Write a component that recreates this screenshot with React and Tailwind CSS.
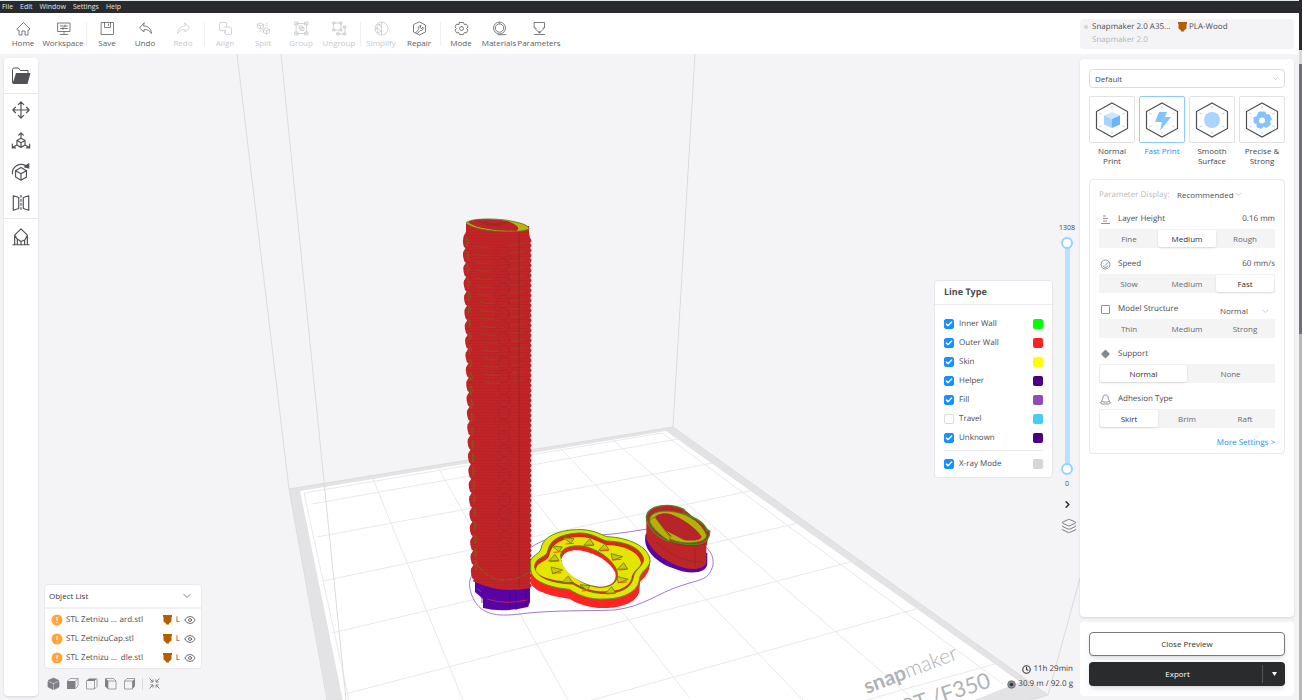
import { Check, ChevronDown, ChevronRight, Clock, Layers, Eye } from "lucide-react";

const menus = ["File", "Edit", "Window", "Settings", "Help"];

const icons = {
  home: <path d="M1 8 7.5 1.5 14 8l-1 1h-1v5H9v-4H6v4H3V9H2z" />,
  workspace: <path d="M2 2h12v8.500H2zM8 10.500V13M4 13.500h8M4.500 5h7M4.500 7.500h7M9 4v2M7 6.500v2" />,
  save: <path d="M1.500 1.500h12v12h-12zM4.500 1.500v5h6v-5M8.500 3v1.500" />,
  undo: <path d="M6 2 1.500 7 6 11V8.500c3.500-.3 6 1.500 7.500 4C13 8 10.500 5 6 5z" />,
  redo: <path d="M9 2l4.500 5L9 11V8.500c-3.500-.3-6 1.500-7.500 4C2 8 4.500 5 9 5z" />,
  align: <path d="M3 1.500h4.500q1 0 1 1V6H12q1.500 0 1.500 1.500v5q0 1-1 1h-4q-1.500 0-1.500-1.500V9.500H3Q1.500 9.500 1.500 8V3Q1.500 1.500 3 1.500zM7 9.500V12M6 6h2.500" />,
  split: <path d="M4.500 2 7.500 3.500v3l-3 1.500-3-1.500v-3zM1.500 3.500l3 1.500 3-1.500M4.500 5v3M10.500 7l3 1.500v3l-3 1.500-3-1.500v-3zM7.500 8.500l3 1.500 3-1.500M10.500 10v3M9.500 4l1.500-2M4 10.500 5.500 9M11 4.500h.5" />,
  group: <path d="M2.500 2.500h10v10h-10zM1 1h3v3H1zM11 1h3v3h-3zM1 11h3v3H1zM11 11h3v3h-3zM5.500 5h3v3h-3zM7 6.500h3v3H7z" />,
  ungroup: <path d="M2 2h7v7H2zM1 1h2v2H1zM8 1h2v2H8zM1 8h2v2H1zM11 6h2v7H6v-2M12 5h2v2h-2zM12 12h2v2h-2zM5 12h2v2H5zM8 8h2v2H8z" />,
  simplify: <path d="M7.500 1a6.500 6.500 0 1 0 0 13 6.500 6.500 0 0 0 0-13v13M7.500 4 4 3l-1 4-1.500 1M3 7l4.500 3M7.500 6.500 4 3M3 7l1 5 3.500-2" />,
  repair: <path d="M7.500 1 13.500 4v7l-6 3-6-3V4zM4 11.500l2.500-3C5.500 6 7 4.500 9 4.500L8 6.500l1.500 1 1.500-1.500c.5 2.500-1 4-3 3.500l-2.500 3" />,
  mode: <path d="M5.500 1.500h4l.8 2 2.200-.3 1.500 2.800L12.700 7.500 14 9l-1.500 2.800-2.200-.3-.8 2h-4l-.8-2-2.200.3L1 9l1.300-1.500L1 6l1.500-2.800 2.200.3zM7.500 5.500a2 2 0 1 0 0 4 2 2 0 0 0 0-4" />,
  materials: <path d="M7.500 1a6 6 0 1 0 0 12 6 6 0 0 0 0-12M7.500 2.800a4.200 4.200 0 1 0 0 8.400 4.200 4.200 0 0 0 0-8.400M6 13.700h8" />,
  parameters: <path d="M2.500 1.500h10v5.500H11v1.500L8.500 11h-2L4 8.500V7H2.500zM2.500 13.500h10M7 11v1h1v-1" />,
  move: <path d="M11 2v18M2 11h18M8 5l3-3 3 3M8 17l3 3 3-3M5 8l-3 3 3 3M17 8l3 3-3 3" />,
  scale: <path d="M11 2v6M8.500 4.500 11 2l2.500 2.500M11 8l4.500 2.500v5L11 18l-4.500-2.500v-5zM6.500 10.500 11 13l4.500-2.500M11 13v5M6.500 15.500 2 18M1.500 14.500V18.500h3.500M15.500 15.500 20 18M20.500 14.500V18.500H17" />,
  rotate: (
    <>
      <path d="M11 6l6 3.500v7L11 20l-6-3.500v-7zM5 9.500l6 3.500 6-3.500M11 13v7M1.500 13C1 5 9 0 16.500 4" />
      <path d="M19.500 2v4.500L15 5.500z" fill="currentColor" />
    </>
  ),
  mirror: <path d="M2.500 3 8.500 5v12l-6 2zM19.500 3l-6 2v12l6 2zM11 2.500v2M11 7v2M11 11.500v2M11 16v2" />,
  support: <path d="M11 2l7 7-2.500 5-4.500 2-4.500-3L4 9zM2 19.500h18M4 19.500V9.500M7 19.500V13.500M11 19.500V16M15 19.500v-5M18 19.500V9" />,
};

const toolbar = [
  { id: "home", label: "Home" },
  { id: "workspace", label: "Workspace", wide: true },
  null,
  { id: "save", label: "Save" },
  { id: "undo", label: "Undo" },
  { id: "redo", label: "Redo", off: true },
  null,
  { id: "align", label: "Align", off: true },
  { id: "split", label: "Split", off: true },
  { id: "group", label: "Group", off: true },
  { id: "ungroup", label: "Ungroup", off: true },
  null,
  { id: "simplify", label: "Simplify", off: true },
  { id: "repair", label: "Repair" },
  null,
  { id: "mode", label: "Mode" },
  { id: "materials", label: "Materials" },
  { id: "parameters", label: "Parameters", wide: true },
];

const lineTypes = [
  { label: "Inner Wall", color: "bg-[#00ff00]", on: true },
  { label: "Outer Wall", color: "bg-[#ff2121]", on: true },
  { label: "Skin", color: "bg-[#ffff00]", on: true },
  { label: "Helper", color: "bg-[#4b0082]", on: true },
  { label: "Fill", color: "bg-[#8d4bbb]", on: true },
  { label: "Travel", color: "bg-[#44cef6]", on: false },
  { label: "Unknown", color: "bg-[#4b0082]", on: true },
];

const objects = [
  { start: "STL Zetnizu ...", end: "ard.stl" },
  { start: "STL ZetnizuCap.stl", end: "" },
  { start: "STL Zetnizu ...", end: "dle.stl" },
];

function Icon({ id, size = 15, className = "" }) {
  return (
    <svg
      width={size}
      height={size}
      viewBox={`0 0 ${size} ${size}`}
      fill="none"
      stroke="currentColor"
      strokeWidth={size > 15 ? 1.3 : 0.8}
      strokeLinejoin="round"
      strokeLinecap="round"
      className={className}
      aria-hidden="true"
    >
      {icons[id]}
    </svg>
  );
}

function Nozzle() {
  return (
    <svg width="9" height="10" viewBox="0 0 9 10" className="shrink-0" aria-hidden="true">
      <path d="M0 0h9v2H8.500v4.500L6 8.500V9.500H3V8.500L.5 6.500V2H0z" fill="#b35f00" />
    </svg>
  );
}

function TopBar() {
  return (
    <header className="flex h-[41px] shrink-0 items-center bg-white pl-1 pr-[5px]">
      {toolbar.map((item, i) =>
        item ? (
          <button
            key={item.id}
            disabled={item.off}
            className={`flex shrink-0 flex-col items-center gap-px pt-[2px] ${item.wide ? "w-[42px]" : "w-[38px]"} ${item.off ? "text-[#c8c9cb]" : "text-[#5b5d61]"}`}
          >
            <Icon id={item.id} />
            <span>{item.label}</span>
          </button>
        ) : (
          <span key={i} className="ml-[2px] mr-px h-6 w-px shrink-0 bg-[#f0f0f0]" />
        )
      )}
      <div className="ml-auto flex h-[30px] w-[214px] shrink-0 flex-col justify-center gap-px rounded bg-[#f4f4f6] pl-1">
        <div className="flex items-center">
          <span className="mr-1 size-1 rounded-full bg-[#d0d0d2]" />
          <span className="w-[86px]">Snapmaker 2.0 A35...</span>
          <Nozzle />
          <span className="ml-[2px]">PLA-Wood</span>
        </div>
        <span className="pl-2 text-[#b3b4b6]">Snapmaker 2.0</span>
      </div>
    </header>
  );
}

// bumpy outline of the printed hilt, walked down the left side and back up the right
function hiltOutline() {
  let d = "M466 224V232";
  for (let i = 0; i < 24; i++) {
    const x = 464 + i * 0.36;
    const y = 236 + i * 14.4;
    d += ` Q${x - 3} ${y + 2} ${x} ${y + 11} l1.500 1 l-1 2`;
  }
  d += " L475 582 Q500 594 530 588";
  for (let i = 0; i < 70; i++) {
    d += " q3 -2.500 0 -5";
  }
  return d + " L529 232 V226 Z";
}

const outline = hiltOutline();
const flecks = Array.from({ length: 25 }, (_, i) => i);
const triangles = [
  [388, 422, 0], [447, 428, 1], [492, 443, 1], [530, 470, 2], [548, 500, 1], [547, 538, 2],
  [512, 572, 1], [437, 563, 0], [382, 540, 1], [350, 510, 2], [342, 475, 1], [353, 447, 0],
];
const triangleShapes = ["-17,-9 14,-6 4,8", "-16,8 3,-12 15,7", "-17,-9 18,0 -12,11"];
const cap = "M272 482C284 458 302 464 305 438C315 405 365 390 410 389C455 387 480 402 500 410C565 412 628 440 630 482C629 507 600 512 598 540C592 580 540 597 495 597C450 600 415 586 388 568C330 563 276 545 272 510Z";

function PrintScene() {
  return (
    <svg
      className="absolute inset-0 h-full w-full"
      viewBox="0 54 1299 646"
      preserveAspectRatio="xMidYMid slice"
      role="img"
      aria-label="Sliced model preview"
    >
      <defs>
        <pattern id="layers" width="30" height="3" patternUnits="userSpaceOnUse">
          <path d="M0 1 Q15 2.500 30 1" stroke="#8b1d1d" strokeWidth=".5" fill="none" opacity=".45" />
        </pattern>
        <pattern id="skin" width="6" height="6" patternUnits="userSpaceOnUse" patternTransform="rotate(35)">
          <path d="M0 1H6M0 4H6" stroke="#cfd200" strokeWidth="1" />
        </pattern>
      </defs>

      {/* build plate */}
      <path d="M289 489 673 427 1048 695 1028 702H328z" fill="#e3e3e5" />
      <path d="M300 491 666 431 1020 682 972 701H343z" fill="#fff" />
      <g fill="none" stroke="#e9e9eb">
        <path d="M304 493 662 433 1003 684M304 493 349 700M312 504 678 439M317 537 713 463M323 581 750 491M332 633 798 523M345 694 858 560M560 709 923 607M803 718 998 663" />
        <path d="M373 479 463 700M439 469 568 700M502 459 690 698M560 448 803 700M613 440 911 697" />
      </g>
      <g fill="none" stroke="#dcdcde">
        <path d="M237 54 289 489 673 427 695 54M281 54 346 700M673 427 1048 695 1080 578M1048 695 1020 703M289 489 327 700" />
      </g>
      <g fill="#afb2b6" fontFamily="Lato, sans-serif">
        <text x="867" y="694" fontSize="21" transform="rotate(-21 867 694)">
          <tspan fontWeight="bold">snap</tspan>
          <tspan fontWeight="300">maker</tspan>
        </text>
        <text x="905" y="715" fontSize="22" transform="rotate(-18 905 715)">0T /F350</text>
      </g>

      {/* skirt */}
      <path
        d="M475 571C466 580 470 592 474 600C482 614 495 617 520 614C550 610 590 611 615 610C645 606 655 594 683 585C702 579 709 580 713 565C714 555 709 550 705 546M530 548C545 538 560 534 574 534M602 535C625 533 640 530 648 529"
        fill="none"
        stroke="#8d56bd"
        strokeWidth=".8"
      />

      {/* hilt */}
      <path d="M475 577V592L483 599V608Q503 613 528 607L530 602V579z" fill="#5804a5" />
      <path d="M482 598V603M510 593V610M516 592V610M526 590V606" stroke="#3c0077" strokeWidth=".7" />
      <path d="M487 599Q505 605 527 600M477 588 481 592" stroke="#c91c48" fill="none" />
      <path d={outline} fill="#c32428" />
      <path d={outline} fill="url(#layers)" />
      {flecks.map((i) => (
        <g key={i} fill="none" strokeLinecap="round">
          <path d={`M${467 + i * 0.36} ${238 + i * 13.5}l2 4-2 4z`} stroke="#756b15" strokeWidth="1" opacity=".65" />
          <ellipse cx={503 + i * 0.08} cy={252 + i * 12.4} rx="6" ry="6" stroke="#76252c" strokeWidth=".5" opacity=".45" />
          <ellipse cx={503 + i * 0.08} cy={257 + i * 12.4} rx="9" ry="5" stroke="#8b292e" strokeWidth=".5" opacity=".4" />
          {i < 18 && (
            <path
              d={`M${474 + i * 0.7} ${246 + i * 8}q8 2 14 1M${508 + i * 0.3} ${245 + i * 8}q10 1 ${18 - i * 0.6} -3`}
              stroke="#7d6717"
              strokeWidth=".8"
              strokeDasharray="4 1.500"
              opacity=".65"
            />
          )}
        </g>
      ))}
      <path d="M519 231V588" stroke="#842426" strokeWidth=".7" />
      <path d="M475 560Q483 577 500 580Q518 581 529 572" stroke="#77691b" fill="none" strokeDasharray="6 2" />
      <path d="M466 223C470 218 497 218 511 221C521 223 529 225 529 229C519 234 475 232 466 223z" fill="#b7b40e" stroke="#487b17" strokeWidth=".8" />
      <path d="M468 222C475 218 500 219 510 222C519 226 520 229 516 231C494 231 474 228 468 222z" fill="#b92629" />
      <path d="M479 221Q493 230 507 222M484 221Q493 227 502 222" stroke="#7d2629" fill="none" strokeWidth=".6" />

      <g transform="translate(440 400) scale(.33333)">
        {/* cap */}
        <path d="M272 482V545C275 572 330 588 388 596C415 612 450 625 495 624C540 624 590 608 598 575L600 545C615 530 629 520 631 482z" fill="#fd2523" />
        <path d={cap} fill="#ecec00" />
        <path d={cap} fill="url(#skin)" stroke="#4d9216" strokeWidth="3" />
        <path
          d="M284 500C286 468 320 477 324 450C332 412 375 402 415 399C455 397 480 418 500 423C560 425 602 444 611 477C612 498 582 508 579 535C573 567 535 580 493 581C455 580 425 568 399 552C340 550 288 535 284 500z"
          fill="#d72a1d"
          stroke="#4a8619"
          strokeWidth="3"
        />
        <path
          d="M288 512C289 482 323 490 329 463C337 425 380 413 415 411C455 410 480 430 500 435C555 437 595 455 603 488C600 506 577 510 574 536C565 563 535 573 493 574C455 574 425 563 399 545C345 544 297 532 288 512z"
          fill="#ecec00"
        />
        <path
          d="M288 512C289 482 323 490 329 463C337 425 380 413 415 411C455 410 480 430 500 435C555 437 595 455 603 488C600 506 577 510 574 536C565 563 535 573 493 574C455 574 425 563 399 545C345 544 297 532 288 512z"
          fill="url(#skin)"
        />
        {triangles.map(([x, y, kind]) => (
          <g key={`${x}-${y}`} transform={`translate(${x} ${y})`} fill="#c9c60c" stroke="#6d7a11" strokeWidth="2.500">
            <polygon points={triangleShapes[kind]} />
            <path d="M-12 10 14 8" stroke="#e73d1a" />
          </g>
        ))}
        <path d="M362 465C365 440 400 436 425 438C470 445 515 475 530 510C540 545 515 562 480 562C430 560 365 515 362 465z" fill="#f0261d" stroke="#568515" strokeWidth="3" />
        <path d="M364 478C370 452 400 448 425 452C470 460 510 485 526 518C532 545 510 560 480 560C430 558 368 520 364 478z" fill="#fff" />

        {/* pommel */}
        <path d="M618 400C605 440 640 485 700 505C745 525 802 522 802 490V460z" fill="#5405a4" />
        <path d="M619 350V415C632 455 685 492 735 505C765 511 795 504 799 488V440L809 392L732 328C690 305 625 315 619 350z" fill="#bd2629" />
        <path d="M619 350C625 313 690 308 732 328V342C765 352 795 370 802 393H809C810 419 790 435 758 434C725 434 695 424 683 423C645 407 619 378 619 350z" fill="#b9252b" stroke="#4f8b1b" strokeWidth="4" />
        <path d="M628 364C627 330 680 330 710 337C750 345 785 370 800 405C800 425 765 430 735 429C700 425 640 405 628 364z" fill="#b5b10a" stroke="#4a7d16" strokeWidth="3" />
        <path d="M645 350C660 338 678 338 694 343C725 355 765 380 785 410C782 421 760 424 728 420L690 408L650 362z" fill="#b52529" />
        <path d="M680 393 742 425 708 422z" fill="#b5b10a" />
        <path d="M630 367C640 385 665 410 688 423L690 412 645 352C636 352 630 358 630 367z" fill="#b5b10a" stroke="#45811a" strokeWidth="2" />
        <path d="M690 425Q738 445 802 432M765 443V503M648 425Q715 490 792 487" stroke="#90262b" strokeWidth="2" fill="none" />
      </g>
    </svg>
  );
}

function ToolRail() {
  return (
    <nav aria-label="Tools" className="my-1 ml-1 flex w-[34px] shrink-0 flex-col rounded bg-white text-[#505256] shadow-sm">
      <button aria-label="Open" className="flex h-[35px] items-center justify-center">
        <svg width="20" height="18" viewBox="0 0 20 18" aria-hidden="true">
          <path d="M1.500 16V2.500L2.500 1h5l2 2.500H17V7" fill="none" stroke="currentColor" />
          <path d="M5 6h14.500l-3 11h-15z" fill="currentColor" />
        </svg>
      </button>
      <div className="flex flex-col border-y border-[#e6e6e8]">
        {["move", "scale", "rotate", "mirror"].map((id) => (
          <button key={id} aria-label={id} className="flex h-[31px] items-center justify-center">
            <Icon id={id} size={22} className="size-5" />
          </button>
        ))}
      </div>
      <button aria-label="support" className="flex h-[35px] items-center justify-center">
        <Icon id="support" size={22} className="size-5" />
      </button>
    </nav>
  );
}

const cubeViews = [
  { name: "Isometric", d: "M6.500 1 12 3.500 6.500 6 1 3.500zM1 4.500 6 7v5.500L1 10zM12 4.500 7 7v5.500L12 10z", solid: "M6.500 1 12 3.500 6.500 6 1 3.500zM1 4.500 6 7v5.500L1 10zM12 4.500 7 7v5.500L12 10z" },
  { name: "Front", d: "M1.500 4 4 1.500h8V9l-2.500 2.500M9.500 4 12 1.500", solid: "M1 4h8.500v8H1z" },
  { name: "Top", d: "M1.500 4v8h8l2.500-2.500v-8M9.500 4v8", solid: "M1 4 4 1.500h8L9.500 4z" },
  { name: "Left", d: "M1.500 1.500h8L12 4v8H4V4h8M4 4 1.500 1.500", solid: "M1 1.500 4 4v8L1 9.500z" },
  { name: "Right", d: "M1.500 4 4 1.500h8M1.500 4v8h8V4z", solid: "M9.500 4 12 1.500V9L9.500 12z" },
];

function ObjectPanel() {
  return (
    <div className="mb-[10px] ml-[6px] flex w-[158px] shrink-0 flex-col justify-end">
      <section className="rounded border border-[#e9e9eb] bg-white pb-px">
        <button className="flex h-6 w-full items-center justify-between border-b-2 border-[#f0f0f1] pl-1 pr-2 text-[#38393c]">
          Object List
          <ChevronDown size={12} strokeWidth={1.3} />
        </button>
        <ul className="pt-px">
          {objects.map((item) => (
            <li key={item.start + item.end} className="flex h-[19px] items-center pl-[6px] pr-[5px]">
              <svg width="12" height="12" viewBox="0 0 12 12" className="mr-[3px] shrink-0" aria-hidden="true">
                <circle cx="6" cy="6" r="5.500" fill="#ffa43b" />
                <path d="M6 3v4M6 8.200v1" stroke="#fff" />
              </svg>
              <span className="flex w-[77px] justify-between">
                <span>{item.start}</span>
                <span>{item.end}</span>
              </span>
              <span className="ml-auto flex items-center gap-1">
                <Nozzle />
                <span>L</span>
                <button aria-label="Toggle visibility">
                  <Eye size={12} strokeWidth={1.6} />
                </button>
              </span>
            </li>
          ))}
        </ul>
      </section>
      <div className="mt-2 flex items-center gap-[6px] pl-[3px] text-[#7e8085]">
        {cubeViews.map((v) => (
          <button key={v.name} aria-label={`${v.name} view`}>
            <svg width="13" height="13" viewBox="0 0 13 13" aria-hidden="true">
              <path d={v.d} fill="none" stroke="currentColor" strokeWidth=".7" />
              <path d={v.solid} fill="currentColor" />
            </svg>
          </button>
        ))}
        <span className="h-3 w-px bg-[#d9d9db]" />
        <button aria-label="Fit view">
          <svg width="11" height="11" viewBox="0 0 11 11" fill="none" stroke="currentColor" aria-hidden="true">
            <path d="M.5.5 4 4M4 1.500V4H1.500M10.500.5 7 4M7 1.500V4h2.500M.5 10.500 4 7M4 9.500V7H1.500M10.500 10.500 7 7M7 9.500V7h2.500" />
          </svg>
        </button>
      </div>
    </div>
  );
}

function LineRow({ label, color, on }) {
  return (
    <label className="flex h-[19px] items-center">
      <span className="relative mr-[5px] flex size-[10px]">
        <input
          type="checkbox"
          defaultChecked={on}
          className="peer size-[10px] appearance-none rounded-[2px] border border-[#dcdcde] bg-white checked:border-[#1890ff] checked:bg-[#1890ff]"
        />
        <Check size={8} strokeWidth={4} className="pointer-events-none absolute left-px top-px hidden text-white peer-checked:block" />
      </span>
      {label}
      <span className={`ml-auto size-[10px] rounded-[2px] ${color}`} />
    </label>
  );
}

function PreviewControls() {
  return (
    <div className="ml-auto flex shrink-0 flex-col pr-1 pt-[13px]">
      <div className="flex-1" />
      <div className="flex items-center gap-[5px]">
        <section className="w-[119px] rounded border border-[#e6e6e8] bg-white">
          <h2 className="flex h-[24px] items-center border-b border-[#ebebed] px-[9px] text-[9px] font-bold text-[#4a4c50]">
            Line Type
          </h2>
          <div className="px-[9px] pb-[3px] pt-[10px]">
            {lineTypes.map((t) => (
              <LineRow key={t.label} {...t} />
            ))}
            <div className="mt-[2px] border-t border-[#ebebed] pt-1">
              <LineRow label="X-ray Mode" color="bg-[#d5d6d9]" on />
            </div>
          </div>
        </section>
        <div className="flex w-[18px] flex-col items-center">
          <span className="text-[7px]">1308</span>
          <div className="relative mt-[2px] flex h-[238px] w-3 flex-col items-center">
            <span className="z-10 size-3 shrink-0 rounded-full border-2 border-[#91d5ff] bg-white" />
            <span className="-my-px w-[5px] flex-1 bg-[#bae0ff]" />
            <span className="z-10 size-3 shrink-0 rounded-full border-2 border-[#91d5ff] bg-white" />
            <input
              type="range"
              aria-label="Top layer"
              max="1308"
              defaultValue="1308"
              className="absolute inset-x-0 top-0 z-20 h-1/2 w-3 opacity-0 [direction:rtl] [writing-mode:vertical-lr]"
            />
            <input
              type="range"
              aria-label="Bottom layer"
              max="1308"
              defaultValue="0"
              className="absolute inset-x-0 bottom-0 z-20 h-1/2 w-3 opacity-0 [direction:rtl] [writing-mode:vertical-lr]"
            />
          </div>
          <span className="mt-1 text-[7px]">0</span>
          <button aria-label="Expand" className="mt-2 text-[#303134]">
            <ChevronRight size={11} strokeWidth={3.5} />
          </button>
          <button aria-label="Layers" className="mt-2 pl-1 text-[#6a6c70]">
            <Layers size={16} strokeWidth={1.3} />
          </button>
        </div>
      </div>
      <div className="flex flex-1 flex-col items-end justify-end gap-[3px] pb-[10px] pr-[3px] text-[#38393c]">
        <span className="flex items-center gap-[2px]">
          <Clock size={9} strokeWidth={3} /> 11h 29min
        </span>
        <span className="flex items-center gap-[2px]">
          <svg width="9" height="9" viewBox="0 0 9 9" aria-hidden="true">
            <circle cx="4.500" cy="4.500" r="3.800" fill="#8e9093" stroke="#606266" strokeWidth=".8" />
            <circle cx="4.500" cy="4.500" r="1.700" fill="#303134" />
          </svg>
          30.9 m / 92.0 g
        </span>
      </div>
    </div>
  );
}

const profiles = [
  {
    label: "Normal Print",
    art: (
      <>
        <path d="M20 12 28 15.500 20 19 12 15.500z" fill="#cbe6ff" />
        <path d="M12 15.500 20 19V28L12 24.500z" fill="#a5d3ff" />
        <path d="M28 15.500 20 19V28L28 24.500z" fill="#69b4fb" />
      </>
    ),
  },
  { label: "Fast Print", art: <path d="M17 12h8l-2 5h6L18 31l2-9h-7z" fill="#83c3ff" />, active: true },
  { label: "Smooth Surface", art: <circle cx="20" cy="20" r="8" fill="#a9d4ff" /> },
  {
    label: "Precise & Strong",
    art: (
      <>
        <path d="M17 12h6l1 3 3-.500 2.500 4.500-2 2.500 1 3-4 3-3-1.500-2 2.500-4.500-1.500v-3l-3-1.500v-5l3-1z" fill="#86c3fc" stroke="#86c3fc" strokeLinejoin="round" />
        <circle cx="20" cy="20.500" r="3" fill="#fff" />
      </>
    ),
  },
];

const rowIcons = {
  layer: <path d="M3 2h3M3 4.500h5M3 7h4M1 9.500h9" />,
  speed: <path d="M5.500 1a4.500 4.500 0 1 0 0 9 4.500 4.500 0 0 0 0-9M3 6.500a2.600 2.600 0 0 0 5 0M5 6.500l3-3M3 4h.5M5.500 3V3" />,
  model: <path d="M2 1.500h7q.5 0 .5.5v7q0 .5-.5.5H2q-.5 0-.5-.5V2q0-.5.5-.5z" />,
  support: <path d="M5.500 1.500 9 5 5.500 8.500 2 5z" fill="currentColor" strokeWidth="1.500" strokeLinejoin="round" />,
  adhesion: <path d="M5.500 1C3.500 1 2.500 2.500 3 4L1.800 6.500Q2 8 4 8h3q2 0 2.200-1.500L8 4c.5-1.500-.5-3-2.500-3M2 7 .5 9l1.500 1h7l1.500-1L9 7" />,
};

const settings = [
  { icon: "layer", label: "Layer Height", value: "0.16 mm", options: ["Fine", "Medium", "Rough"], active: "Medium" },
  { icon: "speed", label: "Speed", value: "60 mm/s", options: ["Slow", "Medium", "Fast"], active: "Fast" },
  { icon: "model", label: "Model Structure", select: true, options: ["Thin", "Medium", "Strong"] },
  { icon: "support", label: "Support", options: ["Normal", "None"], active: "Normal" },
  { icon: "adhesion", label: "Adhesion Type", options: ["Skirt", "Brim", "Raft"], active: "Skirt" },
];

function Select({ label, value, className }) {
  return (
    <span className={`flex items-center ${className}`}>
      <select aria-label={label} className="min-w-0 flex-1 appearance-none bg-transparent outline-none">
        <option>{value}</option>
      </select>
      <ChevronDown size={9} strokeWidth={1.5} className="pointer-events-none shrink-0 text-[#a8a9ab]" />
    </span>
  );
}

function Setting({ icon, label, value, select, options, active }) {
  return (
    <fieldset className="min-w-0">
      <div className="flex h-5 items-center">
        <svg width="11" height="11" viewBox="0 0 11 11" fill="none" stroke="currentColor" strokeWidth=".9" className="ml-px mr-[7px] shrink-0 text-[#85878b]" aria-hidden="true">
          {rowIcons[icon]}
        </svg>
        <span>{label}</span>
        {value && <span className="ml-auto">{value}</span>}
        {select && <Select label="Model type" value="Normal" className="ml-auto mr-[5px] w-[50px] pt-1" />}
      </div>
      <div role="group" aria-label={label} className="flex h-[19px] bg-[#f4f4f4] p-px">
        {options.map((option) => (
          <button
            key={option}
            aria-pressed={option === active}
            className={`flex-1 ${option === active ? "rounded-[2px] bg-white text-[#303134] shadow-sm" : "text-[#68696d]"}`}
          >
            {option}
          </button>
        ))}
      </div>
    </fieldset>
  );
}

function Sidebar() {
  return (
    <aside className="mr-[5px] flex w-[214px] shrink-0 flex-col gap-[5px] bg-[#f4f4f7] pb-1 pt-[5px]">
      <div className="flex-1 rounded bg-white px-[9px] pt-[10px] shadow-sm">
        <Select label="Profile" value="Default" className="h-[19px] rounded border border-[#dcdcde] pl-[5px] pr-1" />
        <div className="mt-2 grid h-[74px] grid-cols-4 gap-1">
          {profiles.map((p) => (
            <button key={p.label} className={`flex flex-col whitespace-normal leading-[10px] ${p.active ? "text-[#1890ff]" : "text-[#444649]"}`}>
              <span className={`flex h-[47px] w-full items-center justify-center rounded-[2px] border ${p.active ? "border-[#91caff]" : "border-[#e2e2e4]"}`}>
                <svg width="40" height="40" viewBox="0 0 40 40" aria-hidden="true">
                  <path d="M20 3 35.500 11.500V28.500L20 37 4.500 28.500V11.500z" fill="none" stroke="#4c4e51" strokeWidth="1.200" />
                  <path d="M20 6v2.500M20 31.500V34M7.500 13l2 1M32.500 13l-2 1M7.500 27l2-1M32.500 27l-2-1" stroke="#c4c5c7" />
                  {p.art}
                </svg>
              </span>
              <span className="w-full px-1 pt-[3px] text-center">{p.label}</span>
            </button>
          ))}
        </div>
        <section className="mt-[9px] rounded border border-[#e8e8ea] px-[9px]">
          <div className="flex h-[29px] items-center">
            <span className="w-[78px] text-[#b9babc]">Parameter Display:</span>
            <Select label="Parameter Display" value="Recommended" className="w-[66px]" />
          </div>
          <div className="flex flex-col gap-[6px]">
            {settings.map((s) => (
              <Setting key={s.label} {...s} />
            ))}
          </div>
          <div className="flex h-[25px] items-center justify-end pt-1">
            <a href="#settings" className="text-[#1890ff]">More Settings &gt;</a>
          </div>
        </section>
      </div>
      <div className="flex flex-col gap-[6px] rounded bg-white px-[9px] py-[10px]">
        <button className="h-6 rounded border border-[#77797c] bg-white text-[#303134] shadow-md">Close Preview</button>
        <div className="flex h-6 items-center rounded bg-[#2a2b2d] text-white shadow-md">
          <button className="h-full flex-1 pl-1">Export</button>
          <span className="h-[18px] w-px bg-[#56585a]" />
          <button aria-label="Export options" className="flex h-full w-[22px] items-center justify-center">
            <svg width="5" height="4" viewBox="0 0 5 4" aria-hidden="true">
              <path d="M0 0h5L2.500 4z" fill="#fff" />
            </svg>
          </button>
        </div>
      </div>
    </aside>
  );
}

export default function App() {
  return (
    <div className="flex h-screen overflow-hidden whitespace-nowrap bg-[#f4f4f7] font-['Open_Sans','Noto_Sans',sans-serif] text-[8px] leading-3 text-[#4a4c50] [text-rendering:geometricPrecision]">
      <div className="flex min-w-0 flex-1 flex-col">
        <nav aria-label="Menu" className="flex h-[13px] shrink-0 items-center gap-[7px] border-t border-[#dfe8e4] bg-[#292a2d] pl-[2px] text-[7px] text-[#e4e4e6]">
          {menus.map((m) => (
            <button key={m}>{m}</button>
          ))}
        </nav>
        <TopBar />
        <main className="relative min-h-0 flex-1">
          <PrintScene />
          <div className="relative flex h-full">
            <ToolRail />
            <ObjectPanel />
            <PreviewControls />
            <Sidebar />
          </div>
        </main>
      </div>
      <div className="flex w-[3px] flex-col bg-[#b9b9bb]">
        <span className="h-[50px] bg-[#292a2d]" />
        <span className="h-[14px] bg-[#dadadc]" />
        <span className="h-[270px] bg-[#6f7073]" />
      </div>
    </div>
  );
}
